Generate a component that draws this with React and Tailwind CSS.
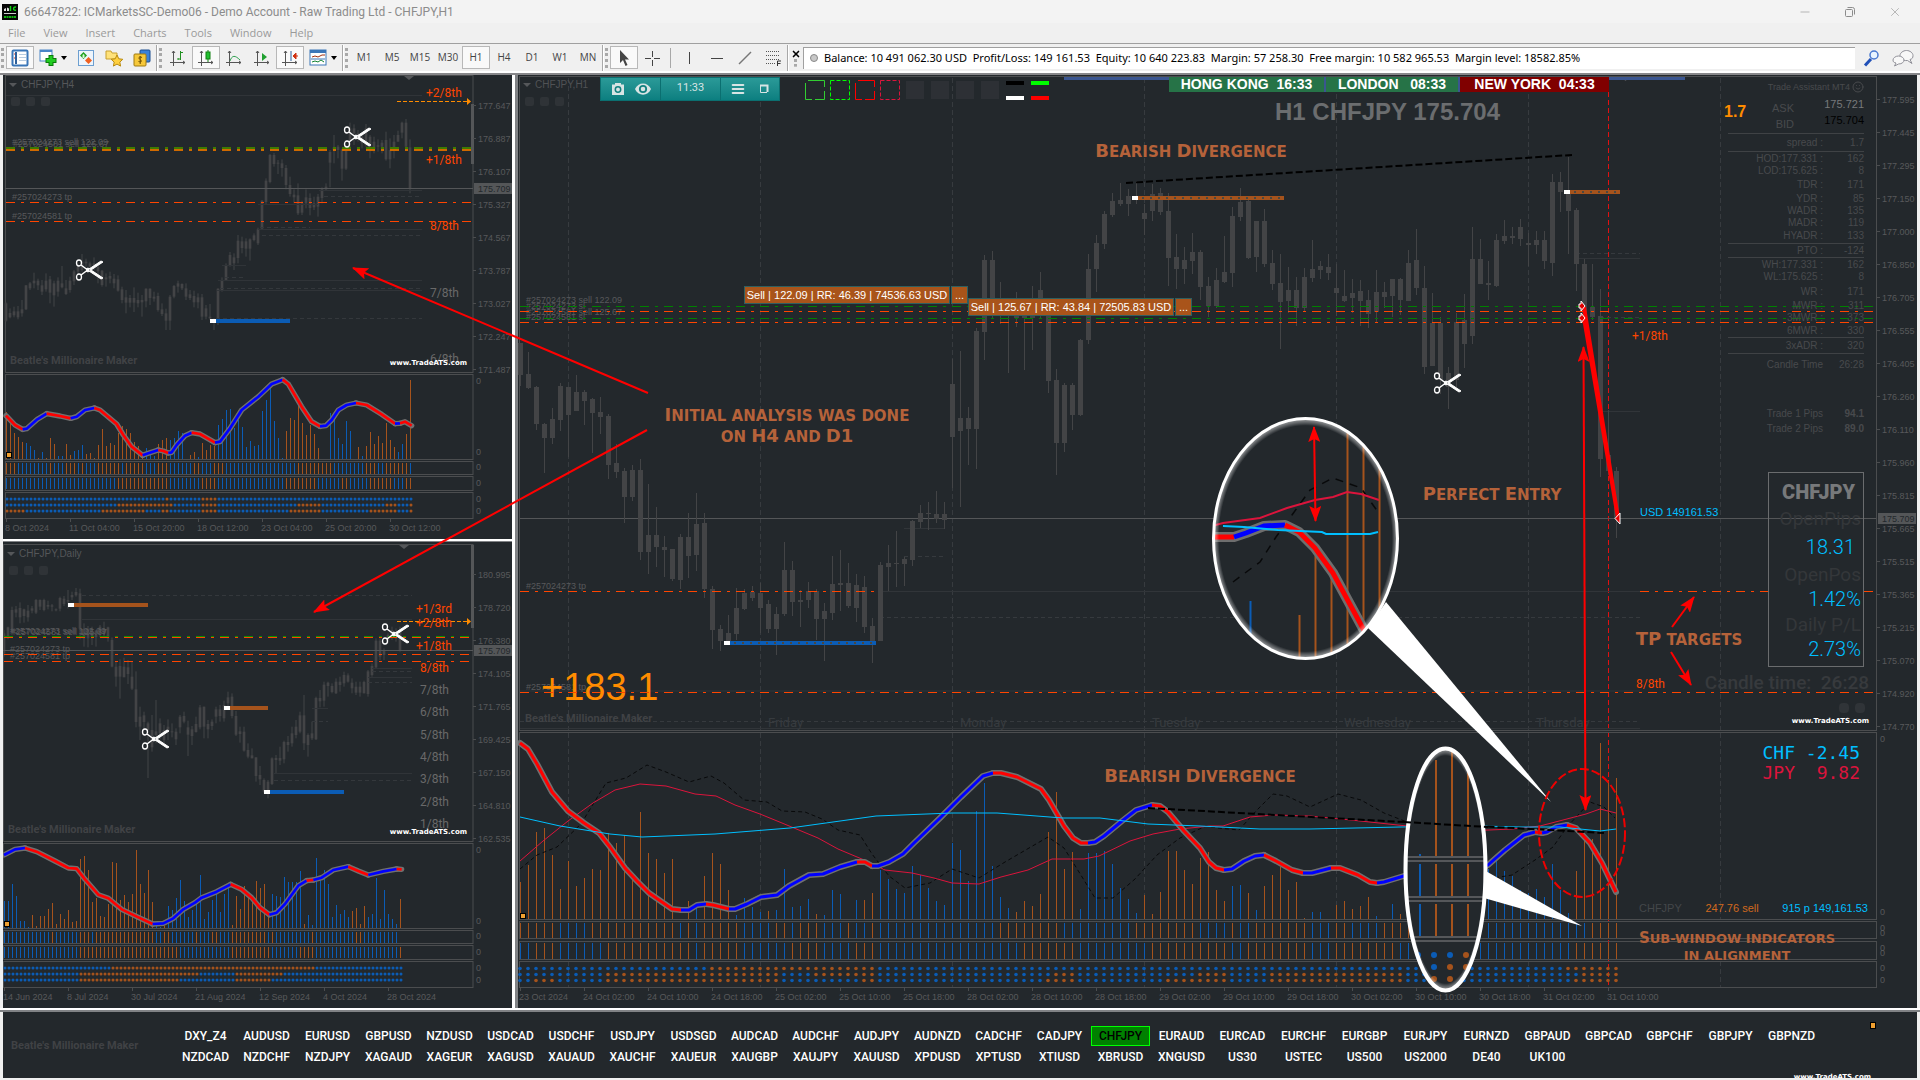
import { LuMenu, LuMinus, LuX, LuSmile } from "react-icons/lu";

const BLUE = "#0b5cb5";
const ORANGE = "#a5531c";

// each row: wick top, wick bottom, body top, body bottom
const h4Candles = [
  [697,755,700,752],[715,745,729,742],[710,742,724,736],[708,748,724,742],[690,740,718,730],[645,720,646,718],
  [636,660,640,655],[608,655,632,640],[626,660,632,646],[630,675,646,665],[610,665,632,658],[618,700,628,668],
  [632,710,640,676],[622,680,632,665],[588,655,640,652],[630,675,655,672],[620,668,632,660],[600,645,604,634],
  [580,615,590,605],[552,605,575,600],[566,590,575,580],[575,600,580,590],[562,600,580,585],[590,640,590,604],
  [600,650,602,645],[610,650,622,628],[605,640,618,626],[612,655,626,640],[616,665,628,662],[650,700,658,690],
  [660,730,682,698],[675,712,684,698],[652,726,684,698],[668,712,690,700],[675,740,690,697],[655,712,656,694],
  [655,705,656,684],[665,695,680,686],[668,725,678,720],[700,738,718,732],[716,780,730,752],[675,780,680,752],
  [645,685,648,680],[632,668,640,650],[640,660,642,655],[640,690,655,680],[660,690,673,684],[662,712,678,697],
  [670,715,682,697],[672,750,682,740],[705,748,715,740],[702,750,740,745],[745,780,748,752],[655,765,656,745],
  [622,665,630,660],[580,632,588,630],[546,590,555,585],[550,600,562,580],[495,580,512,564],[500,550,514,534],
  [505,560,514,536],[505,572,508,536],[490,514,496,510],[473,525,478,520],[390,478,392,476],[325,402,332,396],
  [252,340,255,336],[249,290,255,282],[270,312,278,280],[268,320,280,294],[285,358,294,345],[320,380,345,372],
  [358,400,374,382],[340,435,376,430],[392,435,400,428],[358,415,382,400],[370,436,384,414],[380,420,400,412],
  [372,440,380,410],[352,400,358,384],[340,360,350,358],[240,352,246,278],[195,280,232,240],[225,265,230,240],
  [236,332,238,296],[225,300,234,296],[158,232,175,210],[163,225,175,190],[180,215,190,200],[190,235,200,220],
  [162,230,175,225],[195,265,200,230],[200,250,215,238],[208,245,226,230],[210,250,218,230],[185,272,210,268],
  [205,295,240,268],[195,265,215,242],[182,215,195,215],[155,205,158,188],[147,240,158,230],[208,370,232,355],
];

const d1Candles = [
  [300,380,310,370],[290,328,292,322],[230,308,240,305],[228,262,238,248],[217,280,234,262],[236,278,238,258],
  [225,275,242,262],[228,250,235,242],[207,252,210,248],[208,240,210,230],[206,244,210,240],[212,238,225,230],
  [222,244,226,230],[235,244,238,240],[200,244,204,236],[198,228,206,222],[180,236,210,215],[185,210,195,202],
  [174,200,186,196],[176,328,190,296],[280,350,296,325],[288,352,300,325],[290,345,302,320],[300,350,302,322],
  [285,322,290,310],[275,322,300,312],[290,335,292,325],[322,412,330,410],[395,470,410,440],[388,506,408,440],
  [383,440,410,442],[390,462,412,432],[395,480,440,476],[424,592,478,576],[530,630,560,590],[545,600,556,576],
  [575,744,580,600],[555,665,600,652],[510,640,604,615],[565,628,580,610],[585,640,600,630],[568,630,590,604],
  [580,622,604,606],[595,645,605,628],[555,610,560,592],[545,580,558,575],[572,678,592,614],[588,645,598,618],
  [560,608,582,606],[525,598,532,592],[530,625,530,590],[570,625,582,598],[568,600,575,588],[530,580,538,560],
  [525,575,538,558],[512,575,525,565],[485,540,502,520],[490,565,500,558],[543,618,558,614],[590,638,604,612],
  [590,665,605,662],[640,685,660,680],[655,685,676,685],[682,755,682,738],[708,765,735,748],[745,790,750,785],
  [750,805,755,780],[682,765,685,762],[675,730,684,690],[650,705,684,692],[632,700,636,688],[618,665,636,645],
  [590,650,610,640],[570,625,590,615],[545,610,556,605],[495,660,556,640],[610,680,615,645],[575,630,610,625],
  [500,630,504,628],[480,532,504,514],[455,530,464,512],[455,500,458,468],[460,490,468,486],[445,492,455,490],
  [440,485,455,465],[425,470,435,460],[430,458,436,455],[445,490,458,475],[455,495,470,488],[455,500,470,488],
  [452,490,456,490],[420,500,424,492],[400,440,408,435],[325,415,332,412],[325,390,332,380],[355,390,362,375],
  [310,340,315,330],[290,330,300,320],[295,335,305,325],[290,365,300,360],
];

const h1Candles = [
  [343,386,343,375],[352,389,374,388],[386,430,387,424],[423,473,424,438],[408,444,419,438],[383,431,386,420],
  [387,457,387,415],[375,411,392,411],[390,425,392,401],[398,453,399,413],[397,434,412,417],[414,479,416,465],
  [444,478,463,472],[468,523,471,497],[465,501,470,497],[459,560,470,552],[484,574,535,552],[507,567,535,547],
  [536,577,547,550],[549,581,549,579],[534,589,537,580],[513,578,537,556],[493,571,524,555],[513,598,523,589],
  [586,649,589,630],[625,651,629,641],[615,645,633,641],[588,640,608,634],[589,610,593,609],[586,601,592,598],
  [583,633,593,608],[600,633,604,629],[607,655,614,629],[542,616,570,614],[561,616,570,602],[590,627,600,602],
  [582,608,591,600],[589,640,591,619],[603,661,611,619],[556,620,584,613],[550,611,583,585],[563,608,583,606],
  [574,622,585,608],[576,633,587,627],[618,663,626,641],[562,641,565,641],[545,591,563,567],[531,587,563,564],
  [557,586,559,564],[520,566,521,560],[505,528,513,522],[502,530,513,514],[491,523,514,519],[502,529,514,520],
  [359,488,384,437],[351,507,418,431],[407,465,418,429],[328,469,331,429],[255,360,260,332],[251,318,260,315],
  [282,324,300,316],[303,373,305,316],[292,327,300,318],[303,370,312,318],[286,350,300,318],[272,318,290,316],
  [300,393,310,381],[369,475,380,443],[383,452,385,443],[383,430,385,415],[339,416,340,415],[254,344,269,340],
  [235,292,243,269],[211,249,214,244],[193,217,201,215],[183,206,200,204],[189,216,196,204],[181,204,196,200],
  [204,235,213,219],[184,221,194,211],[188,215,193,212],[193,286,211,258],[234,289,257,269],[247,284,260,269],
  [233,274,252,261],[250,300,252,287],[277,317,286,306],[268,308,280,306],[236,283,272,282],[207,287,216,273],
  [188,221,202,217],[200,259,201,258],[221,272,221,257],[209,267,221,264],[250,290,263,284],[254,349,283,302],
  [267,313,290,301],[277,326,290,308],[268,312,277,308],[240,282,269,278],[261,279,266,270],[254,280,267,273],
  [264,316,288,293],[270,302,296,301],[279,313,293,298],[280,326,291,301],[290,328,300,314],[270,322,292,312],
  [282,308,292,297],[280,317,279,296],[278,315,279,300],[250,301,263,301],[229,295,260,288],[266,374,288,367],
  [293,366,323,366],[317,394,323,380],[367,409,373,387],[313,387,322,380],[294,368,320,344],[227,344,259,336],
  [239,284,259,284],[261,300,283,285],[234,287,240,286],[220,244,236,241],[227,244,236,238],[219,246,227,239],
  [233,266,243,245],[231,254,240,245],[231,269,240,261],[174,276,182,263],[172,212,182,192],[157,254,192,211],
  [208,291,210,264],[259,320,264,317],[264,320,307,317],[289,477,316,459],[410,475,455,471],[467,538,471,518],
];

// histogram bars: colour letter + height
const h4Bars = "o47 o37 o26 o22 o17 b16 b13 b9 o1 b7 o1 o21 o15 b3 b3 o15 o4 b8 b9 b14 o5 o6 o1 o14 o30 o13 o16 o14 o26 o33 o30 o26 o17 o13 o6 b11 b8 b3 o15 o19 o21 b19 b21 b28 b26 o0 o4 o7 b2 o16 o9 o14 o13 b34 b40 b49 b50 b31 b39 b32 b12 b18 b13 b14 b48 b59 b72 b38 b21 b1 o28 o41 o39 o53 o36 o24 o34 o25 o11 o0 o0 b46 b40 b21 b15 b38 b28 b0 o12 b3 o13 o27 o15 o23 o16 o36 o19 o12 b7 b15 o25 o79";
const d1Bars = "b27 b27 b44 b32 b7 b7 b1 o13 o2 o12 o12 o19 o25 o4 o14 o9 o18 o6 o7 o69 o72 o58 o26 o30 o12 o11 o24 o66 o65 o28 o33 o26 o34 o78 o44 o35 o58 o26 b4 b1 o2 b22 b18 b30 b48 b27 b11 b18 b28 b53 b9 b16 b28 b34 b16 b34 b43 o3 o32 o19 o42 o31 o32 o47 o40 o44 o14 b34 b32 b31 b51 b46 b46 b46 b57 o4 b13 b3 b70 b48 b58 b44 b11 b23 b14 b18 b11 o17 o20 o4 o22 b11 b14 b50 b9 b38 b14 b9 b4 o29";
const h1Bars = "o37 o54 o87 o91 o64 o30 o58 o33 o41 o50 o49 o86 o76 o84 o40 o107 o66 o60 o46 o60 b0 o18 b11 o43 o66 o55 o29 b4 b21 b12 b7 o8 b9 b50 b12 b13 b20 o5 b4 b29 b25 o0 b19 o19 o26 b49 b40 b30 b26 b53 b44 b31 b18 b14 b76 b69 b38 b108 b136 b53 b22 b11 o7 o18 o13 o25 o87 o127 o50 o67 b10 b66 b66 b68 b55 b31 b20 b6 o24 o5 o27 o68 o68 o49 o35 o61 o67 o29 o18 b33 b34 o26 b9 o33 o44 o52 o29 o37 o1 b7 b7 b0 o14 o18 o10 o13 o22 b3 b0 b15 o5 b10 b12 b18 b20 b30 b22 b14 b30 b40 b44 b50 b59 b48 b43 b29 b26 b30 b22 b55 b29 b6 o48 o83 o80 o176 o139 o141";

const h4Trend = [
  ["r", "18,1037 45,1065 68,1078"],
  ["b", "68,1078 80,1076 112,1048 140,1031"],
  ["r", "140,1031 180,1038 212,1045"],
  ["b", "212,1045 230,1040 255,1020 283,1014"],
  ["r", "283,1014 300,1020 350,1062 370,1095 395,1130 428,1156"],
  ["b", "428,1156 445,1150 475,1140"],
  ["r", "475,1140 490,1143 505,1149"],
  ["b", "505,1149 515,1147 530,1125 555,1097 575,1088"],
  ["r", "575,1088 600,1092 645,1118"],
  ["b", "645,1118 660,1115 690,1075 725,1020 775,980 815,942 848,929"],
  ["r", "848,929 865,942 905,1010 935,1055 960,1069"],
  ["b", "960,1069 978,1067 995,1050 1015,1020 1040,1005 1068,999"],
  ["r", "1068,999 1100,1005 1145,1033 1185,1061"],
  ["b", "1185,1061 1200,1060"],
  ["r", "1200,1060 1215,1055 1235,1067"],
];

const d1Trend = [
  ["b", "12,975 45,958 75,954"],
  ["r", "75,954 110,965 165,993 205,1014 230,1016 255,1048 295,1094 325,1105 365,1138 415,1162 458,1182"],
  ["b", "458,1182 490,1180 520,1165 550,1138 585,1118 605,1103 650,1085 692,1063"],
  ["r", "692,1063 725,1078 755,1103 780,1133 808,1154"],
  ["b", "808,1154 830,1148 855,1122 895,1067 920,1052"],
  ["r", "920,1052 940,1050"],
  ["b", "940,1050 965,1043 1000,1020 1045,1010"],
  ["r", "1045,1010 1075,1023 1105,1035"],
  ["b", "1105,1035 1150,1024 1190,1017"],
  ["r", "1190,1017 1205,1018"],
];

const h1Trend = [
  ["r", "520,743 528,749 537,764 552,792 568,811 584,823 599,833 610,847 625,868 637,881 649,893 672,909 681,910"],
  ["b", "681,910 689,910 697,905 706,904"],
  ["r", "706,904 713,905 729,909"],
  ["b", "729,909 735,909 747,904 761,897 777,895 789,886 809,875 823,874 840,867 857,862"],
  ["r", "857,862 865,862 872,866"],
  ["b", "872,866 878,866 889,862 903,854 914,843 939,819 961,797 983,776 993,773"],
  ["r", "993,773 1001,773 1017,777 1041,789 1049,800 1064,826 1073,838 1081,843 1088,843"],
  ["b", "1088,843 1095,842 1104,836 1122,821 1136,810 1152,805"],
  ["r", "1152,805 1160,806 1168,812 1184,831 1200,848 1209,862 1216,868 1224,870"],
  ["b", "1224,870 1232,869 1244,861 1255,856 1264,855"],
  ["r", "1264,855 1276,861 1292,870 1303,873"],
  ["b", "1303,873 1312,873 1331,868"],
  ["r", "1331,868 1340,868 1358,875 1370,882 1377,883"],
  ["b", "1377,883 1384,882 1407,875 1450,882 1488,865 1505,850 1524,835 1535,832"],
  ["r", "1535,832 1542,833"],
  ["b", "1542,833 1547,832 1556,827 1567,825"],
  ["r", "1567,825 1576,828 1590,843 1602,863 1616,892"],
];

const h4Strips = ["o3 b8 o1 b3 o3 b1 o1 b3 o6 b1 o5 b3 o3 b6 o2 b3 o3 b16 b2 o9 b3 b5 o3 b2 o6 b1 o1 b2 o1", "b28 o13 b8 o4 b17 o8 b4 b2 o2 b5 o6 b3 o2"];
const h4Dots = ["b40 o1 b8 o4 b49", "b28 o14 b7 o4 b20 o6 b16 o3 b3 o1", "o5 b19 o11 b4 o2 b8 o4 b18 o8 b12 o7 b3 o1"];
const d1Strips = ["b12 o1 b6 o3 b1 o15 b2 o2 b6 o1 b3 o2 b3 o9 b1 o1 b9 o1 b10 o2 b9", "b19 o25 b13 o10 b7 o4 b21 o1"];
const d1Dots = ["b27 o51 b22", "b19 o30 b9 o12 b30", "b19 o25 b14 o9 b33"];
const h1Strips = [
  "o5 b4 o11 b1 o1 b1 o5 b4 o2 b1 o3 b3 o1 b2 o1 b15 o8 b9 o8 b4 o1 b2 o7 b3 o2 b4 o4 b22 o20",
  "b2 o3 b6 o11 b1 o5 b6 o4 b4 o3 b18 o7 b9 o10 b2 o8 b3 o8 b22 o6",
];
const h1Dots = [
  "b24 o21 b86 o7",
  "b11 o22 b4 o8 b22 o3 b15 o4 b5 o17 b22 o5",
  "b2 o3 b6 o22 b10 o2 b21 o4 b11 o8 b5 o17 b21 o6",
];

function expandRuns(runs, count) {
  return runs
    .split(" ")
    .flatMap((run) => Array(Number(run.slice(1))).fill(run[0]))
    .slice(0, count);
}

function Candles({ data, x0, step, wick, body }) {
  return data.map(([high, low, top, bottom], i) => (
    <g key={i} fill="#434446">
      <rect x={x0 + step * i - wick / 2} y={high} width={wick} height={low - high} />
      <rect x={x0 + step * i - body / 2} y={top} width={body} height={Math.max(bottom - top, wick)} />
    </g>
  ));
}

function Histogram({ bars, x0, step, base }) {
  const path = (letter) =>
    bars
      .split(" ")
      .map((bar, i) => (bar[0] === letter ? `M${x0 + step * i} ${base}v-${bar.slice(1)}` : ""))
      .join("");
  return (
    <>
      <path d={path("o")} stroke={ORANGE} />
      <path d={path("b")} stroke={BLUE} />
    </>
  );
}

function Strip({ runs, count, x0, step, top, height }) {
  const path = (letter) =>
    expandRuns(runs, count)
      .map((c, i) => (c === letter ? `M${x0 + step * i} ${top}v${height}` : ""))
      .join("");
  return (
    <>
      <path d={path("o")} stroke={ORANGE} />
      <path d={path("b")} stroke={BLUE} />
    </>
  );
}

function Dots({ runs, count, x0, step, y, r }) {
  return expandRuns(runs, count).map((c, i) => (
    <circle key={i} cx={x0 + step * i} cy={y} r={r} fill={c === "o" ? ORANGE : BLUE} />
  ));
}

function Trend({ segments, width }) {
  return (
    <g fill="none" strokeLinejoin="round">
      {segments.map(([, points], i) => (
        <polyline key={i} points={points} stroke="#707070" strokeWidth={width * 2} strokeLinecap="round" />
      ))}
      {segments.map(([c, points], i) => (
        <polyline key={i} points={points} stroke={c === "r" ? "#ff0000" : "#0000ff"} strokeWidth={width} />
      ))}
    </g>
  );
}

function Label({ x, y, className, children, anchor }) {
  return (
    <text x={x} y={y} dominantBaseline="central" textAnchor={anchor} className={className}>
      {children}
    </text>
  );
}

function DashDot({ x1, x2, y, color, width = 1 }) {
  return <path d={`M${x1} ${y}H${x2}`} stroke={color} strokeWidth={width} strokeDasharray="9 6 3 6" />;
}

function Frame({ x, y, w, h }) {
  return <rect x={x} y={y} width={w} height={h} fill="none" stroke="#4b4d4f" />;
}

function Level({ x1, x2, y, color }) {
  return (
    <g>
      <rect x={x1} y={y - 2} width={x2 - x1} height="4" fill={color} />
      <rect x={x1} y={y - 2} width="6" height="4" fill="#fff" />
    </g>
  );
}

function Scissors({ x, y }) {
  return (
    <g transform={`translate(${x} ${y})`} fill="none" stroke="#fff">
      <ellipse cx="-9" cy="-7" rx="2.5" ry="3" strokeWidth="1.3" />
      <ellipse cx="-9" cy="7" rx="2.5" ry="3" strokeWidth="1.3" />
      <path d="M-7 -5L1 1M-7 5L1 -1" strokeWidth="1.5" />
      <path d="M-2 1L13 -9 15 -8 0 2ZM-2 -1L13 9 15 8 0 -2Z" fill="#fff" strokeWidth="1" />
    </g>
  );
}

const axisText = "font-['Liberation_Sans'] text-[9px] fill-[#58595b]";
const brandText = "font-['Roboto'] text-[11px] font-bold fill-[#404245]";
const siteText = "font-['DejaVu_Sans'] text-[7px] font-bold fill-white";
const hotLevel = "font-['Roboto'] text-[12px] fill-[#ff4500]";
const greyLevel = "font-['Roboto'] text-[12px] fill-[#696969]";

function SideChart({
  top, height, f, left, title, candles, bars, trend, strips, dots, prices, dates, priceY, levels, levelX, siteY, scale, marker, children,
}) {
  const right = 473;
  const x0 = left + 1;
  const count = candles.length;
  return (
    <svg viewBox={`3 ${top} 509 ${height}`} className="block w-full bg-[#23282c]">
      <Frame x={left + 0.5} y={f - 0.5} w={right - left - 0.5} h={297} />
      <Frame x={left + 0.5} y={f + 298.5} w={right - left - 0.5} h={85} />
      <Frame x={left + 0.5} y={f + 385.5} w={right - left - 0.5} h={13} />
      <Frame x={left + 0.5} y={f + 400.5} w={right - left - 0.5} h={14} />
      <Frame x={left + 0.5} y={f + 416.5} w={right - left - 0.5} h={26} />
      <path d={`M${left + 4} ${f + 7}h8l-4 4z M${marker} ${f}h10l-5 4z`} fill="#55575a" />
      <Label x={left + 16} y={f + 8} className="font-['Liberation_Sans'] text-[10px] fill-[#55575a]">{title}</Label>
      {[6, 21, 36].map((dx) => (
        <rect key={dx} x={left + dx} y={f + 21} width="9" height="9" rx="2" fill="#2f3337" />
      ))}
      <g transform={`translate(0 ${scale}) scale(.333333)`}>
        <Candles data={candles} x0={x0 * 3} step={12} wick={3} body={8} />
      </g>
      <path d={`M${left} ${priceY}H${right}`} stroke="#545658" />
      {children}
      {levels.map(([text, y, hot]) => (
        <Label key={text} x={hot === 2 ? levelX : levelX + 4} y={y} className={hot ? hotLevel : greyLevel}>{text}</Label>
      ))}
      <Label x={left + 5} y={f + 284} className={brandText}>Beatle's Millionaire Maker</Label>
      <Label x="467" y={siteY} anchor="end" className={siteText}>www.TradeATS.com</Label>

      <Histogram bars={bars} x0={x0 + 0.5} step={4} base={f + 383} />
      <g transform={`translate(0 ${scale}) scale(.333333)`}>
        <Trend segments={trend} width={8} />
      </g>
      <rect x={left + 1.5} y={f + 376.5} width="5" height="5" fill="#f0a030" stroke="#000" />
      <Strip runs={strips[0]} count={count} x0={x0 + 0.5} step={4} top={f + 387} height={11} />
      <Strip runs={strips[1]} count={count} x0={x0 + 0.5} step={4} top={f + 402} height={11} />
      {dots.map((runs, i) => (
        <Dots key={i} runs={runs} count={count} x0={x0 + 1} step={4} y={f + 423 + i * 6} r={1.5} />
      ))}

      {prices.map((price, i) => (
        <g key={price}>
          <path d={`M473 ${f + 29.5 + i * 33}h3`} stroke="#4b4d4f" />
          <Label x="478" y={f + 29.5 + i * 33} className={axisText}>{price}</Label>
        </g>
      ))}
      <rect x="474" y={priceY - 5.5} width="38" height="11" fill="#545658" />
      <Label x="478" y={priceY} className="font-['Liberation_Sans'] text-[9px] fill-[#23282c]">175.709</Label>
      {[305, 376, 391, 407, 423, 435].map((dy) => (
        <Label key={dy} x="476" y={f + dy} className={axisText}>0</Label>
      ))}
      {dates.map((date, i) => (
        <g key={date}>
          <path d={`M${x0 + 64 * i + 0.5} ${f + 443}v3`} stroke="#4b4d4f" />
          <Label x={left + 64 * i} y={f + 452} className={axisText}>{date}</Label>
        </g>
      ))}
    </svg>
  );
}

function H4Chart() {
  return (
    <SideChart
      top={75} height={464} f={76} left={5} title="CHFJPY,H4" scale={70} marker={404} levelX={426}
      candles={h4Candles} bars={h4Bars} trend={h4Trend} strips={h4Strips} dots={h4Dots}
      prices={["177.647", "176.887", "176.107", "175.327", "174.567", "173.787", "173.027", "172.247", "171.487"]}
      dates={["8 Oct 2024", "11 Oct 04:00", "15 Oct 20:00", "18 Oct 12:00", "23 Oct 04:00", "25 Oct 20:00", "30 Oct 12:00"]}
      priceY={188.5} siteY={363}
      levels={[["+2/8th", 93, 2], ["+1/8th", 160, 2], ["8/8th", 226, 1], ["7/8th", 293, 0], ["6/8th", 359, 0]]}
    >
      <path d="M6 95.5H422M319 190.5h103M258 204.5h60M258 229.5h164M222 265.5h24M218 280.5h204M217 290.5h205" stroke="#303438" />
      <path d="M324 196.5h98M260 227.5h50M262 235.5h160M225 277.5h20M220 288.5h202M216 318.5h206" stroke="#34383c" strokeDasharray="4 3" />
      <Label x="12" y="142" className={axisText}>#257024273 sell 122.09</Label>
      <Label x="13" y="144" className={axisText}>#257024581 sell 125.67</Label>
      <Label x="12" y="197" className={axisText}>#257024273 tp</Label>
      <Label x="12" y="216" className={axisText}>#257024581 tp</Label>
      <DashDot x1={6} x2={472} y={148} color="#3f7a00" width={2} />
      <DashDot x1={6} x2={472} y={150} color="#d06a00" width={2} />
      <DashDot x1={6} x2={472} y={202.5} color="#ff4500" />
      <DashDot x1={6} x2={472} y={221.5} color="#ff4500" />
      <path d="M397 101.5h70" stroke="#ff8c00" strokeDasharray="4 2" />
      <path d="M467 98l4 3.5-4 3.5z" fill="#ff8c00" />
      <path d="M472.5 104v60" stroke="#545658" strokeWidth="3" />
      <Level x1={210} x2={290} y={321} color={BLUE} />
      <Scissors x={356} y={137} />
      <Scissors x={88} y={270} />
    </SideChart>
  );
}

function DailyChart() {
  return (
    <SideChart
      top={542} height={466} f={545} left={3} title="CHFJPY,Daily" scale={530} marker={399} levelX={416}
      candles={d1Candles} bars={d1Bars} trend={d1Trend} strips={d1Strips} dots={d1Dots}
      prices={["180.995", "178.720", "176.380", "174.105", "171.765", "169.425", "167.150", "164.810", "162.535"]}
      dates={["14 Jun 2024", "8 Jul 2024", "30 Jul 2024", "21 Aug 2024", "12 Sep 2024", "4 Oct 2024", "28 Oct 2024"]}
      priceY={650.5} siteY={832}
      levels={[
        ["+1/3rd", 609, 2], ["+2/8th", 623, 2], ["+1/8th", 646, 2], ["8/8th", 668, 1], ["7/8th", 690, 0], ["6/8th", 712, 0],
        ["5/8th", 735, 0], ["4/8th", 757, 0], ["3/8th", 779, 0], ["2/8th", 802, 0], ["1/8th", 824, 0],
      ]}
    >
      <path d="M82 619.5h330M372 668.5h40M368 677.5h44M312 708.5h16M274 773.5h138" stroke="#303438" />
      <path d="M82 595.5h330M372 671.5h40M368 682.5h44M312 721.5h16M274 780.5h138" stroke="#34383c" strokeDasharray="4 3" />
      <Label x="10" y="631" className={axisText}>#257024273 sell 122.09</Label>
      <Label x="11" y="632" className={axisText}>#257024581 sell 125.67</Label>
      <Label x="10" y="649" className={axisText}>#257024273 tp</Label>
      <Label x="10" y="656" className={axisText}>#257024581 tp</Label>
      <DashDot x1={4} x2={470} y={636.5} color="#0a9000" />
      <DashDot x1={4} x2={470} y={637.5} color="#ff4500" />
      <DashDot x1={4} x2={470} y={654.5} color="#ff4500" />
      <DashDot x1={4} x2={470} y={661.5} color="#ff4500" />
      <path d="M397 621.5h70" stroke="#ff8c00" strokeDasharray="4 2" />
      <path d="M467 618l4 3.5-4 3.5z" fill="#ff8c00" />
      <path d="M472.5 545v83" stroke="#545658" strokeWidth="3" />
      <Level x1={68} x2={148} y={605} color={ORANGE} />
      <Level x1={224} x2={268} y={708} color={ORANGE} />
      <Level x1={264} x2={344} y={792} color={BLUE} />
      <Scissors x={394} y={634} />
      <Scissors x={154} y={739} />
    </SideChart>
  );
}

const h1Prices = [
  "177.595", "177.445", "177.295", "177.150", "177.000", "176.850", "176.705", "176.555", "176.405", "176.260",
  "176.110", "175.960", "175.815", "175.665", "175.515", "175.365", "175.215", "175.070", "174.920", "174.770",
];
const h1Dates = [
  "23 Oct 2024", "24 Oct 02:00", "24 Oct 10:00", "24 Oct 18:00", "25 Oct 02:00", "25 Oct 10:00", "25 Oct 18:00",
  "28 Oct 02:00", "28 Oct 10:00", "28 Oct 18:00", "29 Oct 02:00", "29 Oct 10:00", "29 Oct 18:00", "30 Oct 02:00",
  "30 Oct 10:00", "30 Oct 18:00", "31 Oct 02:00", "31 Oct 10:00",
];

function MainChart() {
  return (
    <svg viewBox="518 75 1399 933" className="block w-full bg-[#23282c]">
      <path
        d={[568, 760, 952, 1144, 1336, 1528, 1720].map((x) => `M${x + 0.5} 78V730M${x + 0.5} 733V919M${x + 0.5} 961V987`).join("")}
        stroke="#373b3f"
        strokeDasharray="5 3"
      />
      <path d="M1608.5 92V987" stroke="#e01010" strokeDasharray="5 3" />
      <Frame x={519.5} y={76.5} w={1357} h={654} />
      <Frame x={519.5} y={732.5} w={1357} h={187} />
      <Frame x={519.5} y={921.5} w={1357} h={17} />
      <Frame x={519.5} y={941.5} w={1357} h={18} />
      <Frame x={519.5} y={961.5} w={1357} h={26} />
      <path d="M523 83h8l-4 4zM1621 77h9l-4.500 4z" fill="#55575a" />
      <Label x="535" y="84" className="font-['Liberation_Sans'] text-[10px] fill-[#505255]">CHFJPY,H1</Label>
      {[525, 540, 555].map((x) => (
        <rect key={x} x={x} y="97" width="9" height="9" rx="2" fill="#2f3337" />
      ))}

      <path d="M880 591.5H1640M904 528.5h40M1576 258.5h64M1600 411.5h40M520 691H1640M520 728.5H1640" stroke="#313539" />
      <path d="M880 617.5H1640M904 556.5h40M1576 253.5h64M1600 317.5h40M520 721.5H1640" stroke="#363a3e" strokeDasharray="4 3" />
      <path d="M520 518.5H1876" stroke="#545658" />
      {["Friday", "Monday", "Tuesday", "Wednesday", "Thursday"].map((day, i) => (
        <Label key={day} x={768 + 192 * i} y="722" className="font-['Roboto'] text-[13px] fill-[#373b3f]">{day}</Label>
      ))}
      <Label x="526" y="300" className={axisText}>#257024273 sell 122.09</Label>
      <Label x="526" y="306" className={axisText}>#257024273 sl</Label>
      <Label x="526" y="312" className={axisText}>#257024581 sell 125.67</Label>
      <Label x="526" y="317" className={axisText}>#257024581 sl</Label>
      <Label x="526" y="586" className={axisText}>#257024273 tp</Label>
      <Label x="526" y="687" className={axisText}>#257024581 tp</Label>
      <Candles data={h1Candles} x0={520.5} step={8} wick={1} body={5} />
      <DashDot x1={520} x2={1873} y={306.5} color="#008000" />
      <DashDot x1={520} x2={1873} y={311.5} color="#ff4500" />
      <DashDot x1={520} x2={1873} y={318.5} color="#008000" />
      <DashDot x1={520} x2={1873} y={322.5} color="#ff4500" />
      <DashDot x1={520} x2={880} y={591.5} color="#ff4500" />
      <DashDot x1={1640} x2={1769} y={591.5} color="#ff4500" />
      <DashDot x1={1864} x2={1874} y={591.5} color="#ff4500" />
      <Label x="541" y="687" className="font-['Liberation_Sans'] text-[38px] fill-[#ff8c00]">+183.1</Label>
      <DashDot x1={520} x2={1873} y={692.5} color="#ff4500" />
      <Level x1={1132} x2={1284} y={198} color={ORANGE} />
      <Level x1={1564} x2={1620} y={192} color={ORANGE} />
      <Level x1={724} x2={876} y={643} color={BLUE} />
      <path d="M1142 198H1284M1574 192H1620M734 643H876" stroke="#4b4840" strokeWidth="2" strokeDasharray="2 6" />
      <Scissors x={1446} y={383} />
      <Label x="525" y="718" className={brandText}>Beatle's Millionaire Maker</Label>
      <Label x="1632" y="336" className={hotLevel}>+1/8th</Label>
      <Label x="1636" y="684" className={hotLevel}>8/8th</Label>
      <Label x="1640" y="512" className="font-['Liberation_Sans'] text-[11px] fill-[#00bfff]">USD 149161.53</Label>

      <Histogram bars={h1Bars} x0={520.5} step={8} base={919} />
      <polyline
        fill="none" stroke="#08090a" strokeDasharray="4 3"
        points="520,869 537,855 557,847 581,824 606,783 626,778 647,765 666,772 689,782 711,776 724,783 744,800 767,802 782,811 805,812 822,819 838,830 860,835 872,854 889,876 905,888 930,883 952,869 979,878 1005,862 1048,837 1064,848 1079,872 1095,898 1113,898 1135,879 1157,855 1180,838 1206,826 1218,828 1239,830 1257,810 1273,794 1287,796 1310,807 1338,794 1361,800 1384,813 1407,822 1450,860 1494,878 1512,875 1535,860 1553,847 1567,827 1590,802 1604,807 1615,818"
      />
      <polyline
        fill="none" stroke="#dc143c"
        points="520,861 543,841 568,821 593,803 615,790 640,784 666,786 695,794 716,796 735,805 760,814 782,823 818,838 838,849 869,862 885,870 912,873 934,878 952,883 979,884 1001,877 1028,870 1052,859 1084,859 1099,856 1130,841 1153,834 1180,829 1210,826 1223,826 1250,817 1273,815 1310,816 1351,820 1407,826 1450,831 1489,830 1512,829 1540,826 1563,820 1586,814 1600,809 1616,813"
      />
      <Trend segments={h1Trend} width={3} />
      <polyline
        fill="none" stroke="#00bfff"
        points="520,817 560,826 610,834 642,837 715,834 790,828 876,816 952,813 997,813 1063,818 1100,818 1148,824 1200,826 1260,829 1310,829 1400,827 1480,826 1520,827 1560,827 1580,829 1600,831 1616,829"
      />
      <rect x="520.5" y="913.5" width="5" height="5" fill="#f0a030" stroke="#000" />
      <Strip runs={h1Strips[0]} count={138} x0={520.5} step={8} top={923} height={15} />
      <Strip runs={h1Strips[1]} count={138} x0={520.5} step={8} top={943} height={16} />
      {h1Dots.map((runs, i) => (
        <Dots key={i} runs={runs} count={138} x0={520} step={8} y={968.5 + i * 6} r={1.8} />
      ))}

      {h1Prices.map((price, i) => (
        <g key={price}>
          <path d={`M1876 ${99.5 + i * 33}h4`} stroke="#4b4d4f" />
          <Label x="1882" y={99.5 + i * 33} className={axisText}>{price}</Label>
        </g>
      ))}
      <rect x="1878" y="513" width="38" height="11" fill="#545658" />
      <Label x="1882" y="518.5" className="font-['Liberation_Sans'] text-[9px] fill-[#23282c]">175.709</Label>
      {[739, 912, 928, 933, 948, 953, 968, 980].map((y) => (
        <Label key={y} x="1880" y={y} className={axisText}>0</Label>
      ))}
      {h1Dates.map((date, i) => (
        <g key={date}>
          <path d={`M${520.5 + 64 * i} 988v3`} stroke="#4b4d4f" />
          <Label x={519 + 64 * i} y="997" className={axisText}>{date}</Label>
        </g>
      ))}

      <path d="M1584 307L1618 518M1584 318L1618 518" stroke="#ff0000" strokeWidth="4" />
      <path d="M1579 304h2v-3l4 5-4 5v-3h-2zM1579 316h2v-3l4 5-4 5v-3h-2zM1620 513v11l-5-5.500z" fill="#e00000" stroke="#fff" />
    </svg>
  );
}

// capital letters stand taller than the rest of the note
function Note({ x, y, small, children }) {
  return (
    <text x={x} y={y} textAnchor="middle" className="font-['DejaVu_Sans'] font-bold uppercase fill-[#b5623a]">
      {children.split(/([A-Z0-9]+)/).map((part, i) => (
        <tspan key={i} className={i % 2 ? (small ? "text-[15px]" : "text-[18px]") : small ? "text-[13px]" : "text-[15px]"}>
          {part}
        </tspan>
      ))}
    </text>
  );
}

// arrows, callouts and magnified areas that run across the panes
function Annotations() {
  return (
    <svg viewBox="3 75 1914 933" className="pointer-events-none absolute inset-0 h-full w-full">
      <defs>
        <marker id="tip" viewBox="0 0 16 12" refX="15" refY="6" markerWidth="16" markerHeight="12" markerUnits="userSpaceOnUse" orient="auto-start-reverse">
          <path d="M0 0L16 6 0 12 3 6Z" fill="#ff0000" />
        </marker>
        <clipPath id="lens1"><ellipse cx="1305.5" cy="538.5" rx="92" ry="120" /></clipPath>
        <clipPath id="lens2"><ellipse cx="1445.5" cy="869.5" rx="40" ry="121" /></clipPath>
        <radialGradient id="glow" cx=".5" cy=".5" r=".5">
          <stop offset=".94" stopColor="#ffffff" stopOpacity="0" />
          <stop offset="1" stopColor="#ffffff" stopOpacity=".6" />
        </radialGradient>
      </defs>
      <g fill="none" stroke="#ff0000" strokeWidth="2">
        <path d="M648 393L353 268" markerEnd="url(#tip)" />
        <path d="M647 430L314 612" markerEnd="url(#tip)" />
      </g>
      <g stroke="#000" strokeWidth="2" strokeDasharray="7 3">
        <path d="M1126 183L1572 155" />
        <path d="M1148 808L1604 833" />
      </g>

      <path d="M1386 602L1368 628L1551 802Z" fill="#fff" />
      <ellipse cx="1305.5" cy="538.5" rx="92" ry="120" fill="#23282c" />
      <g clipPath="url(#lens1)" fill="none">
        <path d="M1347.5 417V660M1363.5 417V660M1379.5 417V660M1315.5 556V660M1331.5 570V660M1299.5 615V660" stroke={ORANGE} strokeWidth="2" />
        <path d="M1250.5 601V660" stroke={BLUE} strokeWidth="2" />
        <polyline points="1233,582 1245,573 1260,562 1276,537 1292,515 1310,490 1333,478 1361,488 1378,512" stroke="#08090a" strokeWidth="1.5" strokeDasharray="8 7" />
        <polyline points="1212,526 1223,523 1260,518 1287,508 1315,500 1333,497 1347,492 1361,494 1379,500" stroke="#dc143c" strokeWidth="2" />
        <polyline points="1210,537 1234,537 1246,533 1264,526 1285,525 1299,532 1315,548 1333,573 1366,634" stroke="#6e6e6e" strokeWidth="10" strokeLinejoin="round" />
        <polyline points="1210,537 1234,537" stroke="#ff0000" strokeWidth="5" />
        <polyline points="1234,537 1246,533 1264,526 1285,525" stroke="#0000ff" strokeWidth="5" />
        <polyline points="1285,525 1299,532 1315,548 1333,573 1366,634" stroke="#ff0000" strokeWidth="5" />
        <polyline points="1223,526 1244,527 1278,530 1322,532 1326,534 1370,534 1378,532" stroke="#00bfff" strokeWidth="2" />
      </g>
      <ellipse cx="1305.5" cy="538.5" rx="92" ry="120" fill="url(#glow)" stroke="#fff" strokeWidth="3" />
      <path d="M1314 427L1315.500 521" stroke="#ff0000" strokeWidth="2" markerStart="url(#tip)" markerEnd="url(#tip)" />

      <path d="M1484 870L1484 898L1582 926Z" fill="#fff" />
      <ellipse cx="1445.5" cy="869.5" rx="40" ry="121" fill="#23282c" />
      <g clipPath="url(#lens2)">
        <path d="M1436 760V856M1452 745V856M1468 745V856M1436 864V896M1452 864V896M1468 864V896M1436 904V936M1452 904V936M1468 904V936" stroke={ORANGE} strokeWidth="2" />
        <path d="M1420 854V857M1420 864V896M1420 904V936" stroke={BLUE} strokeWidth="2" />
        <path d="M1404 857H1488M1404 861H1488M1404 897H1488M1404 901H1488M1404 937H1488M1404 941H1488" stroke="#55575a" strokeWidth="2" />
        {[[1418, 955, BLUE], [1434, 955, BLUE], [1450, 955, BLUE], [1466, 955, ORANGE], [1434, 967, BLUE], [1450, 967, ORANGE], [1466, 967, ORANGE], [1434, 979, ORANGE], [1450, 979, ORANGE]].map(
          ([x, y, c]) => (
            <circle key={`${x}-${y}`} cx={x} cy={y} r="3" fill={c} />
          )
        )}
      </g>
      <ellipse cx="1445.5" cy="869.5" rx="40" ry="121" fill="url(#glow)" stroke="#fff" strokeWidth="4" />
      <path d="M1404 822L1488 827" stroke="#000" strokeWidth="2" strokeDasharray="7 3" />

      <ellipse cx="1582" cy="833" rx="43" ry="64" fill="none" stroke="#ee0000" strokeWidth="2" strokeDasharray="9 3" />
      <path d="M1583.500 347L1585.500 810" stroke="#ff0000" strokeWidth="2" markerStart="url(#tip)" markerEnd="url(#tip)" />
      <path d="M1672 627L1694 597" stroke="#ff0000" strokeWidth="2" markerEnd="url(#tip)" />
      <path d="M1671 652L1691 685" stroke="#ff0000" strokeWidth="2" markerEnd="url(#tip)" />

      <Note x="1191" y="157">Bearish Divergence</Note>
      <Note x="787" y="421">Initial analysis was done</Note>
      <Note x="787" y="442">on H4 and D1</Note>
      <Note x="1492" y="500">Perfect Entry</Note>
      <Note x="1689" y="645">TP targets</Note>
      <Note x="1200" y="782">Bearish Divergence</Note>
      <Note x="1737" y="943" small>Sub-window indicators</Note>
      <Note x="1737" y="960" small>in alignment</Note>
    </svg>
  );
}

function SellTag({ children, className }) {
  return (
    <div className={`absolute flex h-[18px] gap-px font-['Liberation_Sans'] text-[11px] leading-4 whitespace-nowrap text-white ${className}`}>
      <button className="w-[206px] border border-[#2f5f5f] bg-[#a9541a] text-center">{children}</button>
      <button className="w-[17px] border border-[#2f5f5f] bg-[#a9541a]">...</button>
    </div>
  );
}

function ChartTopBar() {
  return (
    <div className="absolute inset-x-0 top-[2px] flex items-start pr-[308px] pl-[82px]">
      <div className="flex h-6 w-[180px] items-center border border-[#0b6f70] bg-linear-to-b from-[#2a9a98] to-[#0b7f80] text-[#d8e4e4]">
        <div className="flex h-full w-[60px] items-center justify-center gap-2.5 border-r border-[#0b6f70]">
          <button aria-label="Screenshot">
            <svg viewBox="0 0 14 14" className="h-3.5 w-3.5">
              <path d="M1 2.500h3V1h6v1.500h3V13H1z" fill="#d8e4e4" />
              <circle cx="7" cy="7.500" r="2.700" fill="#d8e4e4" stroke="#12807f" strokeWidth="1.500" />
            </svg>
          </button>
          <button aria-label="Visibility">
            <svg viewBox="0 0 16 12" className="h-3 w-4">
              <path d="M0 6C3-1.500 13-1.500 16 6 13 13.500 3 13.500 0 6Z" fill="#d8e4e4" />
              <circle cx="8" cy="6" r="3.200" fill="#d8e4e4" stroke="#12807f" strokeWidth="1.800" />
            </svg>
          </button>
        </div>
        <span className="h-full w-[60px] border-r border-[#0b6f70] text-center font-['Roboto'] text-[11px] leading-5">11:33</span>
        <div className="flex grow items-center justify-center gap-3">
          <button aria-label="List"><LuMenu className="h-4 w-4 stroke-[3]" /></button>
          <button aria-label="Detach">
            <svg viewBox="0 0 12 12" className="h-3 w-3" fill="none" stroke="#d8e4e4">
              <path d="M2 2.500h7.500V9" strokeWidth="2" />
              <path d="M2.500 2v7.500H9" />
            </svg>
          </button>
        </div>
      </div>
      <svg viewBox="0 0 246 24" className="ml-6 h-6 w-[246px]" fill="none">
        <path d="M4 3.500H20.500V10M20.500 14V22.500H11M8 22.500H1.500V6" stroke="#32cd32" strokeWidth="1" />
        <rect x="26.500" y="3.500" width="19" height="19" stroke="#00ff00" strokeDasharray="4 2" />
        <path d="M54 3.500H70.500V10M70.500 14V22.500H61M58 22.500H51.500V6" stroke="#ff0000" strokeWidth="1" />
        <rect x="76.500" y="3.500" width="19" height="19" stroke="#dc143c" strokeDasharray="4 2" />
        <path d="M102 4h18v18h-18zM127 4h18v18h-18zM152 4h18v18h-18zM177 4h18v18h-18z" fill="#2d3035" />
        <path d="M202 6h18" stroke="#000" strokeWidth="4" />
        <path d="M202 21h18" stroke="#fff" strokeWidth="4" />
        <path d="M227 6h18" stroke="#00ff00" strokeWidth="4" />
        <path d="M227 21h18" stroke="#ff0000" strokeWidth="4" />
      </svg>
      <div className="ml-auto flex gap-0.5 bg-[#3a5590] font-['Liberation_Sans'] text-[14px] leading-[14px] font-bold whitespace-pre text-white">
        <span className="h-[15px] w-[155px] bg-[#267347] text-center">HONG KONG  16:33</span>
        <span className="h-[15px] w-[132px] bg-[#267347] text-center">LONDON   08:33</span>
        <span className="h-[15px] w-[149px] bg-[#800000] text-center">NEW YORK  04:33</span>
      </div>
    </div>
  );
}

const assistantRows = [
  ["spread :", "1.7", "h-[18px] border-t border-[#3f4245]"],
  ["HOD:177.331 :", "162", "h-[13px] border-t border-[#3f4245]"],
  ["LOD:175.625 :", "8", "h-[11px]"],
  ["TDR :", "171", "h-[17px]"],
  ["YDR :", "85", "h-[12px]"],
  ["WADR :", "135", "h-[12px]"],
  ["MADR :", "119", "h-[12px]"],
  ["HYADR :", "133", "h-[15px]"],
  ["PTO :", "-124", "h-[14px] border-t border-[#3f4245]"],
  ["WH:177.331 :", "162", "h-[13px] border-t border-[#3f4245]"],
  ["WL:175.625 :", "8", "h-[12px]"],
  ["WR :", "171", "h-[17px]"],
  ["MWR :", "311", "h-[12px]"],
  ["3MWR :", "373", "h-[12px]"],
  ["6MWR :", "330", "h-[14px]"],
  ["3xADR :", "320", "h-[16px] border-t border-[#3f4245]"],
  ["Candle Time", "26:28", "h-[22px] border-t border-[#3f4245]"],
];

function TradeAssistant() {
  return (
    <aside className="absolute top-1.5 right-[53px] w-[136px] font-['Liberation_Sans'] text-[10px] leading-[11px] text-[#484a4d]">
      <p className="flex items-center justify-end gap-0.5 text-[9px] whitespace-nowrap">
        Trade Assistant MT4 <LuSmile className="h-3 w-3" />
      </p>
      <dl className="grid grid-cols-[66px_1fr] gap-y-px pt-1.5 text-right text-[11px]">
        <dt className="pt-1">ASK</dt>
        <dd className="text-[#77797b]">175.721</dd>
        <dt className="pt-1">BID</dt>
        <dd className="text-black">175.704</dd>
      </dl>
      <table className="mt-[3px] w-full border-collapse text-right">
        <tbody>
          {assistantRows.map(([name, value, rowClass]) => (
            <tr key={name} className={rowClass}>
              <td className="w-[95px] p-0">{name}</td>
              <td className="p-0">{value}</td>
            </tr>
          ))}
        </tbody>
      </table>
      <dl className="mt-8 grid grid-cols-[95px_1fr] gap-y-1 text-right">
        <dt>Trade 1 Pips</dt>
        <dd className="font-bold">94.1</dd>
        <dt>Trade 2 Pips</dt>
        <dd className="font-bold">89.0</dd>
      </dl>
    </aside>
  );
}

function PipsBox() {
  return (
    <section className="absolute top-[397px] right-[53px] h-[195px] w-[96px] border border-[#6a6c6e] px-0.5 pt-2 text-right font-['Roboto'] leading-none">
      <h2 className="pr-1.5 text-[20px] leading-[22px] font-black text-[#77797b]">CHFJPY</h2>
      <p className="pt-1.5 text-[19px] leading-5 text-[#34373a]">OpenPips</p>
      <p className="pr-1.5 text-[20px] leading-9 font-light text-[#00bfff]">18.31</p>
      <p className="text-[19px] leading-5 text-[#34373a]">OpenPos</p>
      <p className="text-[20px] leading-7 font-light text-[#00bfff]">1.42%</p>
      <p className="text-[19px] leading-6 text-[#34373a]">Daily P/L</p>
      <p className="text-[20px] leading-6 font-light text-[#00bfff]">2.73%</p>
    </section>
  );
}

function MainPane() {
  return (
    <div className="relative">
      <MainChart />
      <div className="absolute top-[2px] left-[546px] h-[3px] w-[621px] bg-[#3a5590]" />
      <ChartTopBar />
      <h1 className="absolute top-[23px] left-[757px] font-['Liberation_Sans'] text-[24px] leading-7 font-bold whitespace-nowrap text-[#6b6d6f]">H1 CHFJPY 175.704</h1>
      <p className="absolute top-[27px] left-[1206px] font-['Liberation_Sans'] text-[16px] leading-5 font-bold text-[#ff8c00]">1.7</p>
      <SellTag className="top-[211px] left-[226px]">Sell | 122.09 | RR: 46.39 | 74536.63 USD</SellTag>
      <SellTag className="top-[223px] left-[450px]">Sell | 125.67 | RR: 43.84 | 72505.83 USD</SellTag>
      <TradeAssistant />
      <PipsBox />
      <div className="absolute top-[598px] right-[48px] flex flex-col items-end">
        <p className="font-['Roboto'] text-[19px] leading-5 font-medium whitespace-pre text-[#373a3d]">Candle time:  26:28</p>
        <div className="mt-2.5 flex gap-1.5 pr-1">
          <span className="h-2.5 w-2.5 rounded-sm bg-[#303438]" />
          <span className="h-2.5 w-2.5 rounded-sm bg-[#303438]" />
        </div>
        <p className="mt-1 font-['DejaVu_Sans'] text-[7px] leading-[8px] font-bold text-white">www.TradeATS.com</p>
      </div>
      <div className="absolute top-[668px] right-[57px] text-right font-['DejaVu_Sans_Mono'] text-[18px] leading-5 whitespace-pre">
        <p className="text-[#00bfff]">CHF -2.45</p>
        <p className="text-[#dc143c]">JPY  9.82</p>
      </div>
      <div className="absolute top-[826px] right-[49px] flex w-[229px] justify-between font-['Liberation_Sans'] text-[11px] leading-[14px]">
        <span className="text-[#44474a]">CHFJPY</span>
        <span className="text-[#d2691e]">247.76 sell</span>
        <span className="text-[#00bfff]">915 p 149,161.53</span>
      </div>
    </div>
  );
}

function ToolButton({ label, active, wide, children }) {
  return (
    <button
      aria-label={label}
      className={`flex h-[23px] items-center justify-center gap-1 ${wide ? "w-[38px]" : "w-7"} ${active ? "border border-[#b8b8b8] bg-[#f9f9f9]" : ""}`}
    >
      {children}
      {wide && <svg viewBox="0 0 6 4" className="h-1 w-1.5"><path d="M0 0h6l-3 4z" /></svg>}
    </button>
  );
}

function Grip() {
  return <span className="mx-px h-5 w-1 border-l-[3px] border-dotted border-[#a8a8a8]" />;
}

function Divider() {
  return <span className="h-[26px] w-0.5 border-r border-white bg-[#a8a8a8]" />;
}

function Icon({ children }) {
  return (
    <svg viewBox="0 0 18 18" className="h-[18px] w-[18px]" fill="none">
      {children}
    </svg>
  );
}

const axes = <path d="M4.500 2v15M1 13.500h15M3 4l1.500-2L6 4M14 12l2 1.500-2 1.500" stroke="#555" />;

function Toolbar() {
  return (
    <div className="flex h-7 items-center border-t border-[#a0a0a0] bg-[#f0f0f0]">
      <Grip />
      <ToolButton label="Market watch" active>
        <Icon>
          <rect x="1.500" y="1.500" width="15" height="15" rx="1" fill="#fff" stroke="#3a76b8" strokeWidth="2" />
          <path d="M5 3v12" stroke="#2d5f9a" strokeWidth="2" />
          <path d="M8 5.500h7M8 8.500h7M8 11.500h7" stroke="#b8cce0" />
          <path d="M3 5h1M3 9h1" stroke="#e03020" />
        </Icon>
      </ToolButton>
      <ToolButton label="New chart" wide>
        <Icon>
          <rect x="1" y="1" width="12" height="11" fill="#fff" stroke="#4a86c8" />
          <path d="M1 2h12" stroke="#4a86c8" strokeWidth="2" />
          <path d="M12 6v11M6.500 11.500h11" stroke="#0a7a0a" strokeWidth="5" />
          <path d="M12 7v9M7.500 11.500h9" stroke="#22cc22" strokeWidth="3" />
        </Icon>
      </ToolButton>
      <ToolButton label="New order">
        <Icon>
          <rect x="1.500" y="1.500" width="15" height="15" fill="#eef5fc" stroke="#6d9fd0" />
          <path d="M6.500 3l3.500 3.500-3.500 3.500L3 6.500z" fill="#20a020" />
          <path d="M5.500 6l1-1 1 1v3h-2z" fill="#d8f8d8" />
          <path d="M11.500 8l3.500 3.500-3.500 3.500L8 11.500z" fill="#f06020" />
        </Icon>
      </ToolButton>
      <ToolButton label="Navigator">
        <Icon>
          <path d="M1 2h5l1 2h5v6H1z" fill="#ffe27a" stroke="#c8a030" />
          <path d="M12 6l1.800 3.800 4 .5-3 2.800.8 4-3.600-2-3.600 2 .8-4-3-2.800 4-.5z" fill="#ffd040" stroke="#b88a10" />
        </Icon>
      </ToolButton>
      <ToolButton label="Trade">
        <Icon>
          <rect x="7" y="1" width="10" height="12" rx="1" fill="#3b82d8" stroke="#1d4f90" />
          <rect x="1" y="5" width="12" height="12" rx="1" fill="#f6c83a" stroke="#a07a10" />
          <path d="M9 8.500c-3-1.500-4 .5-2 2s2 3-1.500 2M7.200 7v8" stroke="#6a4a00" />
        </Icon>
      </ToolButton>
      <Divider />
      <Grip />
      <ToolButton label="Bar chart"><Icon>{axes}<path d="M9 11v-2M11.500 2v9M9 10h2.500M11.500 3.500h2.500" stroke="#209020" /></Icon></ToolButton>
      <ToolButton label="Candlesticks" active><Icon>{axes}<path d="M11 1v12" stroke="#108010" /><rect x="9" y="3" width="4" height="7" fill="#20c030" stroke="#108010" /></Icon></ToolButton>
      <ToolButton label="Line chart"><Icon>{axes}<path d="M5 12c2-6 5-6 10-1" stroke="#30a050" /></Icon></ToolButton>
      <ToolButton label="Auto scroll"><Icon>{axes}<path d="M9 4l5 4-5 4z" fill="#20a030" /></Icon></ToolButton>
      <ToolButton label="Chart shift" active><Icon>{axes}<path d="M10 2v10" stroke="#2d5f9a" /><path d="M17 7h-4M15 4l-3 3 3 3z" stroke="#d03010" fill="#d03010" /></Icon></ToolButton>
      <ToolButton label="Templates" wide>
        <Icon>
          <rect x="1" y="1" width="16" height="15" fill="#fff" stroke="#3a76b8" />
          <path d="M1 2.500h16" stroke="#3a76b8" strokeWidth="3" />
          <path d="M3 8l3-1 3 1 4-2h3" stroke="#a03010" />
          <path d="M3 13l3-1 3 1 3-2 3 2" stroke="#108030" />
          <path d="M2 10h14" stroke="#3a76b8" />
        </Icon>
      </ToolButton>
      <Divider />
      <Grip />
      <div className="flex font-['Open_Sans'] text-[10px] text-[#444]">
        {["M1", "M5", "M15", "M30", "H1", "H4", "D1", "W1", "MN"].map((tf) => (
          <ToolButton key={tf} active={tf === "H1"}>{tf}</ToolButton>
        ))}
      </div>
      <Divider />
      <Grip />
      <ToolButton label="Cursor" active><Icon><path d="M5 1v13l3-3 2.500 6 2-1-2.500-5.500h4z" fill="#444" /></Icon></ToolButton>
      <ToolButton label="Crosshair"><Icon><path d="M9.500 2v6M9.500 11v6M2 9.500h6M11 9.500h6" stroke="#444" /></Icon></ToolButton>
      <span className="mx-1 h-5 w-px bg-[#a8a8a8]" />
      <ToolButton label="Vertical line"><Icon><path d="M9.500 3v12" stroke="#444" /></Icon></ToolButton>
      <ToolButton label="Horizontal line"><Icon><path d="M3 9.500h12" stroke="#444" /></Icon></ToolButton>
      <ToolButton label="Trendline"><Icon><path d="M3 15L15 3" stroke="#777" strokeWidth="1.500" /></Icon></ToolButton>
      <ToolButton label="Fibonacci">
        <Icon>
          <path d="M2 2.500h14M2 6.500h14M2 10.500h14M2 14.500h9" stroke="#555" strokeDasharray="1 1" />
          <path d="M13.500 17v-5H17M13.500 14.500h3" stroke="#333" />
        </Icon>
      </ToolButton>
      <Divider />
      <div className="flex w-[14px] flex-col items-center">
        <button aria-label="Close bar"><LuX className="h-2.5 w-2.5 stroke-[4] text-black" /></button>
        <span className="h-2 w-1 border-l-[3px] border-dotted border-[#a8a8a8]" />
      </div>
      <p className="flex h-[22px] grow items-center gap-1.5 border-t border-l border-[#a0a0a0] bg-white pl-1.5 font-['Noto_Sans'] text-[11px] whitespace-pre text-black">
        <span className="h-2 w-2 rounded-full border border-[#888] bg-[#c8c8c8]" />
        Balance: 10 491 062.30 USD  Profit/Loss: 149 161.53  Equity: 10 640 223.83  Margin: 57 258.30  Free margin: 10 582 965.53  Margin level: 18582.85%
      </p>
      <div className="flex w-[65px] items-center justify-between pr-1.5 pl-2">
        <button aria-label="Search">
          <Icon><path d="M8 10L2 16.500" stroke="#2050b8" strokeWidth="3" /><circle cx="11" cy="6" r="4" fill="#e8f4ff" stroke="#4878d0" strokeWidth="1.500" /></Icon>
        </button>
        <button aria-label="Messages">
          <svg viewBox="0 0 22 18" className="h-[18px] w-[22px]" fill="#f8f8f8" stroke="#909098">
            <path d="M18 10.500l2 4-4.500-3C10 12 8 9 8 6.500S11 1.500 14.500 1.500 21 4 21 6.500 20 10 18 10.500z" />
            <path d="M4 14l-1.500 3L6.500 15C10 15 12 13 12 11S9.500 7 6.500 7 1 9 1 11s1 2.500 3 3z" />
          </svg>
        </button>
      </div>
    </div>
  );
}

function TitleBar() {
  return (
    <header className="flex h-[23px] items-center bg-[#f3f3f3] pl-0.5 font-['Roboto'] text-[12px] text-[#8c8c8c]">
      <svg viewBox="0 0 16 16" className="mr-1.5 h-4 w-4">
        <rect width="16" height="16" fill="#050505" />
        <path d="M2 7V5l2-1v3zM5 7V3.500l2 1V7z" fill="#ddd" />
        <path d="M8.500 2v5M14 3.200c-3-1-3.500 4 0 3" stroke="#12d012" strokeWidth="1.500" fill="none" />
        <path d="M2 9.500h12" stroke="#ccc" />
        <path d="M2 13h12" stroke="#12b012" strokeWidth="2" strokeDasharray="2 .5" />
      </svg>
      <span>66647822: ICMarketsSC-Demo06 - Demo Account - Raw Trading Ltd - CHFJPY,H1</span>
      <div className="ml-auto flex gap-[31px] pr-[18px]">
        <button aria-label="Minimize"><LuMinus className="h-3.5 w-3.5 stroke-1" /></button>
        <button aria-label="Restore">
          <svg viewBox="0 0 14 14" className="h-3.5 w-3.5" fill="none" stroke="#8c8c8c">
            <rect x="2.500" y="4.500" width="7" height="7" rx="1" />
            <path d="M4.500 2.500h5a2 2 0 0 1 2 2v5" />
          </svg>
        </button>
        <button aria-label="Close"><LuX className="h-3.5 w-3.5 stroke-1" /></button>
      </div>
    </header>
  );
}

const symbols = [
  "DXY_Z4", "AUDUSD", "EURUSD", "GBPUSD", "NZDUSD", "USDCAD", "USDCHF", "USDJPY", "USDSGD", "AUDCAD", "AUDCHF", "AUDJPY",
  "AUDNZD", "CADCHF", "CADJPY", "CHFJPY", "EURAUD", "EURCAD", "EURCHF", "EURGBP", "EURJPY", "EURNZD", "GBPAUD", "GBPCAD",
  "GBPCHF", "GBPJPY", "GBPNZD", "NZDCAD", "NZDCHF", "NZDJPY", "XAGAUD", "XAGEUR", "XAGUSD", "XAUAUD", "XAUCHF", "XAUEUR",
  "XAUGBP", "XAUJPY", "XAUUSD", "XPDUSD", "XPTUSD", "XTIUSD", "XBRUSD", "XNGUSD", "US30", "USTEC", "US500", "US2000",
  "DE40", "UK100",
];

function SymbolBar() {
  return (
    <footer className="relative mx-[3px] flex h-[66px] items-start overflow-hidden bg-[#23282c]">
      <p className="w-[172px] shrink-0 pt-[28px] pl-2 font-['Roboto'] text-[11px] leading-3 font-bold whitespace-nowrap text-[#404245]">
        Beatle's Millionaire Maker
      </p>
      <div className="grid grid-cols-[repeat(27,minmax(0,61px))] gap-y-px pt-[14px] font-['Roboto'] text-[12px] leading-[18px] font-medium text-white">
        {symbols.map((symbol) => (
          <button
            key={symbol}
            className={symbol === "CHFJPY" ? "mx-px h-5 border border-[#00ff00] bg-[#008000] text-black" : "h-5"}
          >
            {symbol}
          </button>
        ))}
      </div>
      <span className="mt-2.5 ml-12 h-[7px] w-1.5 border border-black bg-[#f0a030]" />
      <p className="absolute -bottom-1 right-[46px] font-['DejaVu_Sans'] text-[7px] leading-[10px] font-bold text-white">www.TradeATS.com</p>
    </footer>
  );
}

export default function App() {
  return (
    <div className="min-h-screen overflow-x-hidden bg-[#f0f0f0]">
      <TitleBar />
      <nav className="flex h-5 gap-[18px] pl-2 font-['Open_Sans'] text-[11px] leading-5 text-[#9a9a9a]">
        {["File", "View", "Insert", "Charts", "Tools", "Window", "Help"].map((item) => (
          <a key={item} href="#">{item}</a>
        ))}
      </nav>
      <Toolbar />
      <main className="border-t-2 border-white">
        <div className="border-t-2 border-[#87878a] px-[3px]">
          <div className="relative grid grid-cols-[509fr_6px_1399fr]">
            <div className="flex flex-col">
              <H4Chart />
              <div className="h-[3px] border-b border-[#808285] bg-white" />
              <DailyChart />
            </div>
            <div className="border-r-[3px] border-[#808285] bg-white" />
            <MainPane />
            <Annotations />
          </div>
        </div>
        <div className="h-1 border-t-2 border-white bg-[#808285]" />
      </main>
      <SymbolBar />
    </div>
  );
}
